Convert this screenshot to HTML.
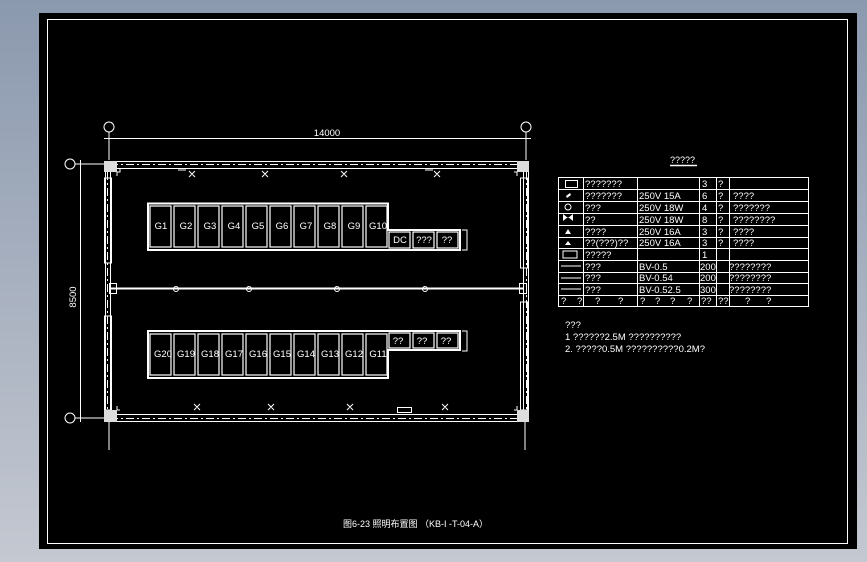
<!DOCTYPE html>
<html><head><meta charset="utf-8"><style>
html,body{margin:0;padding:0;}
body{width:867px;height:562px;overflow:hidden;background:linear-gradient(#8b99ae,#c4c8d1);}
svg{display:block}
text{font-family:"Liberation Sans","Noto Sans CJK SC",sans-serif;fill:#fff}
</style></head><body>
<svg width="867" height="562" viewBox="0 0 867 562">
<rect x="39" y="13" width="818" height="536" fill="#000"/>
<rect x="47.5" y="19.5" width="800" height="524" fill="none" stroke="#fff" stroke-width="1"/>
<g stroke="#fff" fill="none" stroke-width="1">
<circle cx="109" cy="127" r="5"/><circle cx="526" cy="127" r="5"/>
<circle cx="70" cy="164" r="5"/><circle cx="70" cy="418" r="5"/>
<line x1="109" y1="132" x2="109" y2="160"/><line x1="526" y1="132" x2="526" y2="160"/>
<line x1="104" y1="138.5" x2="531" y2="138.5"/>
<line x1="75" y1="164" x2="104" y2="164"/><line x1="75" y1="418" x2="104" y2="418"/>
<line x1="80.5" y1="160" x2="80.5" y2="422"/>
<line x1="109" y1="422" x2="109" y2="450"/><line x1="525" y1="422" x2="525" y2="450"/>
<rect x="105.5" y="161.5" width="423" height="260"/>
<rect x="110.5" y="168.5" width="413" height="246"/>
<path d="M117 176 V172 H120 V169 M517 176 V172 H514"/>
<path d="M117 406 V410 H120 M517 406 V410 H514"/>
<line x1="110" y1="164.5" x2="524" y2="164.5" stroke-dasharray="8 3 2 3"/>
<line x1="110" y1="418.5" x2="524" y2="418.5" stroke-dasharray="8 3 2 3"/>
<line x1="107.5" y1="172" x2="107.5" y2="414" stroke-dasharray="8 3 2 3"/>
<line x1="526.5" y1="172" x2="526.5" y2="414" stroke-dasharray="8 3 2 3"/>
<rect x="104.5" y="178" width="7" height="85"/><rect x="104.5" y="316" width="7" height="94"/>
<rect x="520.5" y="178" width="7" height="90"/><rect x="520.5" y="302" width="7" height="108"/>
<line x1="111" y1="288.5" x2="524" y2="288.5" stroke-width="2"/>
<rect x="109.5" y="283.5" width="7" height="10"/><rect x="519.5" y="283.5" width="7" height="10"/>
<circle cx="176" cy="289" r="2.5"/><circle cx="249" cy="289" r="2.5"/><circle cx="337" cy="289" r="2.5"/><circle cx="425" cy="289" r="2.5"/>
<path d="M189 171 l6 6 M195 171 l-6 6 M262 171 l6 6 M268 171 l-6 6 M341 171 l6 6 M347 171 l-6 6 M434 171 l6 6 M440 171 l-6 6"/>
<path d="M178 170 h8 M425 170 h8"/>
<path d="M194 404 l6 6 M200 404 l-6 6 M268 404 l6 6 M274 404 l-6 6 M347 404 l6 6 M353 404 l-6 6 M442 404 l6 6 M448 404 l-6 6"/>
<rect x="397.5" y="407.5" width="14" height="5"/>
<path d="M462 230 h5 v20 h-5 M462 331 h5 v20 h-5"/>
</g>
<g fill="#ddd"><rect x="104" y="161" width="13" height="11"/><rect x="517" y="161" width="12" height="11"/><rect x="104" y="410" width="13" height="12"/><rect x="517" y="410" width="12" height="12"/></g>
<g stroke="#fff" fill="none">
<path d="M148 203.5 H388 V230 H460 V250 H148 Z" stroke-width="2"/>
<path d="M148 331 H460 V350 H388 V378 H148 Z" stroke-width="2"/>
<g stroke-width="1.2">
<rect x="150" y="206" width="21" height="41"/><rect x="174" y="206" width="21" height="41"/><rect x="198" y="206" width="21" height="41"/><rect x="222" y="206" width="21" height="41"/><rect x="246" y="206" width="21" height="41"/><rect x="270" y="206" width="21" height="41"/><rect x="294" y="206" width="21" height="41"/><rect x="318" y="206" width="21" height="41"/><rect x="342" y="206" width="21" height="41"/><rect x="366" y="206" width="21" height="41"/>
<rect x="389" y="232" width="21" height="16"/><rect x="413" y="232" width="21" height="16"/><rect x="437" y="232" width="21" height="16"/>
<rect x="150" y="334" width="21" height="41"/><rect x="174" y="334" width="21" height="41"/><rect x="198" y="334" width="21" height="41"/><rect x="222" y="334" width="21" height="41"/><rect x="246" y="334" width="21" height="41"/><rect x="270" y="334" width="21" height="41"/><rect x="294" y="334" width="21" height="41"/><rect x="318" y="334" width="21" height="41"/><rect x="342" y="334" width="21" height="41"/><rect x="366" y="334" width="21" height="41"/>
<rect x="389" y="333" width="21" height="15"/><rect x="413" y="333" width="21" height="15"/><rect x="437" y="333" width="21" height="15"/>
</g></g>
<g font-size="9.5" text-anchor="middle">
<text x="161" y="229">G1</text><text x="186" y="229">G2</text><text x="210" y="229">G3</text><text x="234" y="229">G4</text><text x="258" y="229">G5</text><text x="282" y="229">G6</text><text x="306" y="229">G7</text><text x="330" y="229">G8</text><text x="354" y="229">G9</text><text x="378" y="229">G10</text>
<text x="400" y="243">DC</text><text x="424" y="243">???</text><text x="447" y="243">??</text>
<text x="163" y="357">G20</text><text x="186" y="357">G19</text><text x="210" y="357">G18</text><text x="234" y="357">G17</text><text x="258" y="357">G16</text><text x="282" y="357">G15</text><text x="306" y="357">G14</text><text x="330" y="357">G13</text><text x="354" y="357">G12</text><text x="378" y="357">G11</text>
<text x="398" y="344">??</text><text x="422" y="344">??</text><text x="446" y="344">??</text>
<text x="327" y="136">14000</text>
<text transform="translate(76,297) rotate(-90)">8500</text>
</g>
<text x="670" y="163" font-size="9">?????</text>
<line x1="670" y1="165.5" x2="697" y2="165.5" stroke="#fff" stroke-width="1.5"/>
<g stroke="#fff" fill="none" stroke-width="1">
<rect x="558.5" y="177.5" width="250" height="129"/>
<path d="M559 189.5H809M559 201.5H809M559 213.5H809M559 225.5H809M559 237.5H809M559 248.5H809M559 260.5H809M559 272.5H809M559 283.5H809M559 295.5H809"/>
<path d="M583.5 177V307M637.5 177V307M699.5 177V307M716.5 177V307M729.5 177V307"/>
<rect x="565.5" y="180.5" width="12" height="7"/>
<circle cx="568" cy="207" r="3"/>
<rect x="563" y="251" width="14" height="7"/>
<path d="M561 266h20M561 278h20M561 289h20"/>
</g>
<g font-size="9.5">
<text x="585" y="187">???????</text><text x="702" y="187">3</text><text x="718" y="187">?</text>
<text x="585" y="199">???????</text><text x="639" y="199">250V 15A</text><text x="702" y="199">6</text><text x="718" y="199">?</text><text x="733" y="199">????</text>
<text x="585" y="211">???</text><text x="639" y="211">250V 18W</text><text x="702" y="211">4</text><text x="718" y="211">?</text><text x="733" y="211">???????</text>
<text x="585" y="223">??</text><text x="639" y="223">250V 18W</text><text x="702" y="223">8</text><text x="718" y="223">?</text><text x="733" y="223">????????</text>
<text x="585" y="235">????</text><text x="639" y="235">250V 16A</text><text x="702" y="235">3</text><text x="718" y="235">?</text><text x="733" y="235">????</text>
<text x="585" y="246">??(???)??</text><text x="639" y="246">250V 16A</text><text x="702" y="246">3</text><text x="718" y="246">?</text><text x="733" y="246">????</text>
<text x="585" y="258">?????</text><text x="702" y="258">1</text>
<text x="585" y="270">???</text><text x="639" y="270">BV-0.5</text><text x="700" y="270">200</text><text x="729" y="270">????????</text>
<text x="585" y="281">???</text><text x="639" y="281">BV-0.54</text><text x="700" y="281">200</text><text x="729" y="281">????????</text>
<text x="585" y="293">???</text><text x="639" y="293">BV-0.52.5</text><text x="700" y="293">300</text><text x="729" y="293">????????</text>
<text x="561" y="304">?</text><text x="577" y="304">?</text><text x="595" y="304">?</text><text x="618" y="304">?</text><text x="640" y="304">?</text><text x="655" y="304">?</text><text x="670" y="304">?</text><text x="687" y="304">?</text><text x="701" y="304">??</text><text x="718" y="304">??</text><text x="745" y="304">?</text><text x="766" y="304">?</text>
<text x="565" y="328">???</text>
<text x="565" y="340">1  ??????2.5M  ??????????</text>
<text x="565" y="352">2. ?????0.5M  ??????????0.2M?</text>
</g>
<g fill="#fff"><path d="M566 196l4-3 1 2-4 3z"/><path d="M563 221l5-4 5 4v-7l-5 4-5-4z"/><path d="M565 234l3-5 3 5z"/><path d="M565 245l3-4 3 4z"/></g>
<text x="343" y="527" font-size="9">图6-23  照明布置图 （KB-I -T-04-A）</text>
</svg>
</body></html>
